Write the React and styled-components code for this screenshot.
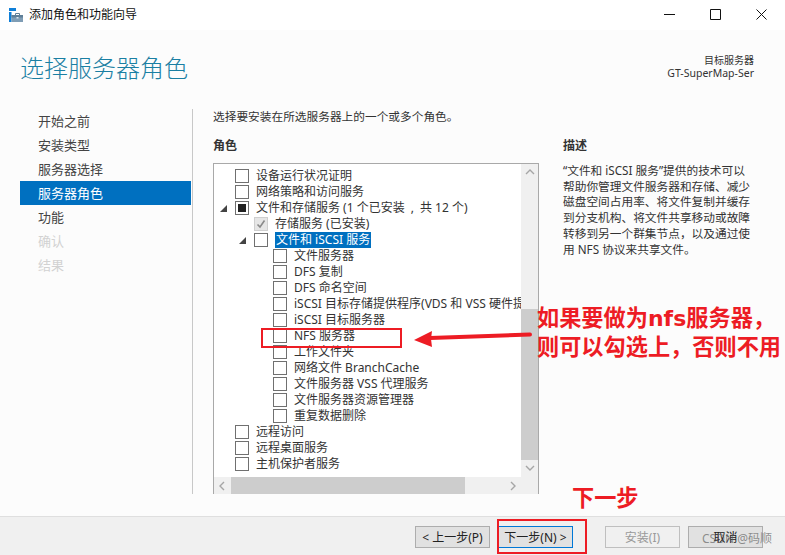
import React from 'react'
import styled, { createGlobalStyle } from 'styled-components'

const FONT = '"Noto Sans", "Noto Sans CJK SC", sans-serif'

const GlobalStyle = createGlobalStyle`
  html, body {
    margin: 0;
    padding: 0;
    background: #fcfcfc;
    overflow: hidden;
  }
  * {
    box-sizing: border-box;
  }
`

const Window = styled.div`
  position: relative;
  width: 785px;
  height: 555px;
  display: flex;
  flex-direction: column;
  overflow: hidden;
  background: #fcfcfc;
  color: #3c3c3c;
  font-family: ${FONT};
  font-size: 12px;
`

const TitleBar = styled.div`
  height: 30px;
  flex: none;
  display: flex;
  align-items: center;
  padding-left: 9px;
  background: #fff;
`

const TitleText = styled.span`
  margin-left: 6px;
  color: #111;
  font-size: 12px;
  line-height: 16px;
`

const WindowButtons = styled.div`
  margin-left: auto;
  align-self: flex-start;
  display: flex;
  padding-right: 1px;
`

const WindowButton = styled.div`
  width: 46px;
  height: 28px;
  display: flex;
  align-items: center;
  justify-content: center;
`

const Header = styled.div`
  height: 70px;
  flex: none;
  display: flex;
  justify-content: space-between;
  padding: 22px 31px 0 20px;
`

const PageTitle = styled.h1`
  margin: 0;
  color: #1a7fa3;
  font-size: 24px;
  font-weight: 300;
  line-height: 32px;
`

const TargetServer = styled.div`
  padding-top: 2px;
  text-align: right;
  color: #333;
  font-size: 10.5px;
  line-height: 13px;
  & > .cjk {
    font-size: 10px;
  }
`

const Body = styled.div`
  flex: 1;
  min-height: 0;
  display: flex;
  padding: 9px 0 22px 20px;
`

const Sidebar = styled.div`
  width: 173px;
  flex: none;
  border-right: 1px solid #c8c8c8;
  padding-right: 1px;
`

const StepItem = styled.div`
  height: 24px;
  padding-left: 18px;
  font-size: 13px;
  line-height: 24px;
  color: ${p => (p.$disabled ? '#d2d2d2' : p.$active ? '#fff' : '#444')};
  background: ${p => (p.$active ? '#0070c0' : 'transparent')};
`

const Content = styled.div`
  flex: 1;
  min-width: 0;
  padding-left: 20px;
`

const Intro = styled.div`
  height: 16px;
  line-height: 14px;
  color: #333;
  font-size: 11.7px;
`

const Columns = styled.div`
  display: flex;
  gap: 24px;
  margin-top: 12px;
`

const RolesColumn = styled.div`
  width: 326px;
  flex: none;
`

const SectionLabel = styled.div`
  height: 26px;
  padding-top: 1px;
  font-size: 12px;
  font-weight: 700;
  line-height: 16px;
  color: #333;
`

const ListBox = styled.div`
  width: 326px;
  height: 331px;
  display: grid;
  grid-template-columns: 1fr 17px;
  grid-template-rows: 1fr 17px;
  border: 1px solid #a9a9a9;
  background: #fff;
`

const Rows = styled.div`
  min-width: 0;
  overflow: hidden;
  padding-top: 4px;
`

const Row = styled.div`
  height: 16px;
  display: flex;
  align-items: center;
  white-space: nowrap;
  padding-left: ${p => 6 + p.$level * 19}px;
  color: #333;
  font-size: 12px;
`

const Expander = styled.span`
  width: 15px;
  flex: none;
  display: flex;
  align-items: center;
`

const CheckBox = styled.span`
  width: 14px;
  height: 14px;
  flex: none;
  display: flex;
  align-items: center;
  justify-content: center;
  border: 1px solid ${p => (p.$disabled ? '#cfcfcf' : '#707070')};
  background: ${p => (p.$disabled ? '#e6e6e6' : '#fff')};
`

const MixedMark = styled.span`
  width: 8px;
  height: 8px;
  background: #222;
`

const RowLabel = styled.span`
  margin-left: 7px;
  padding: 0 ${p => (p.$selected ? '1px' : '0')};
  line-height: 16px;
  color: ${p => (p.$selected ? '#fff' : 'inherit')};
  background: ${p => (p.$selected ? '#0070c0' : 'transparent')};
`

const VerticalBar = styled.div`
  display: flex;
  flex-direction: column;
  background: #f0f0f0;
`

const HorizontalBar = styled.div`
  display: flex;
  background: #f0f0f0;
`

const ScrollButton = styled.div`
  width: 17px;
  height: 17px;
  flex: none;
  display: flex;
  align-items: center;
  justify-content: center;
`

const VerticalTrack = styled.div`
  flex: 1;
  padding-top: ${p => p.$offset}px;
  & > div {
    height: 151px;
    background: #cdcdcd;
  }
`

const HorizontalThumb = styled.div`
  width: 234px;
  flex: none;
  background: #cdcdcd;
`

const Spacer = styled.div`
  flex: 1;
`

const Corner = styled.div`
  background: #f0f0f0;
`

const DescriptionColumn = styled.div`
  width: 195px;
  flex: none;
`

const Description = styled.p`
  margin: 0;
  color: #333;
  font-size: 11.7px;
  line-height: 15.7px;
  white-space: pre-line;
`

const Footer = styled.div`
  height: 39px;
  flex: none;
  display: flex;
  justify-content: flex-end;
  gap: 8px;
  padding: 9px 22px 0 0;
  border-top: 1px solid #dfdfdf;
  background: #f0f0f0;
`

const WizardButton = styled.div`
  width: 75px;
  height: 22px;
  margin-left: ${p => (p.$gapBefore ? '24px' : '0')};
  display: flex;
  align-items: center;
  justify-content: center;
  border: 1px solid ${p => (p.$disabled ? '#bfbfbf' : p.$focused ? '#0078d7' : '#adadad')};
  background: ${p => (p.$disabled ? '#f0f0f0' : '#e1e1e1')};
  color: ${p => (p.$disabled ? '#9a9a9a' : '#222')};
  font-size: 12px;
  white-space: nowrap;
`

const RedBox = styled.div`
  position: absolute;
  left: ${p => p.$x}px;
  top: ${p => p.$y}px;
  width: ${p => p.$w}px;
  height: ${p => p.$h}px;
  border: 2px solid #ed1c24;
`

const RedNote = styled.div`
  position: absolute;
  left: ${p => p.$x}px;
  top: ${p => p.$y}px;
  color: #ed1c24;
  font-size: 22.2px;
  font-weight: 700;
  line-height: 29px;
  white-space: nowrap;
  & > .latin {
    font-family: "DejaVu Sans", sans-serif;
    font-size: 22px;
  }
`

const ArrowOverlay = styled.svg`
  position: absolute;
  left: 410px;
  top: 325px;
`

const Watermark = styled.div`
  position: absolute;
  left: 702px;
  top: 531px;
  color: rgba(90, 90, 90, 0.65);
  font-size: 12px;
  line-height: 16px;
  white-space: nowrap;
`

const steps = [
  { label: '开始之前' },
  { label: '安装类型' },
  { label: '服务器选择' },
  { label: '服务器角色', active: true },
  { label: '功能' },
  { label: '确认', disabled: true },
  { label: '结果', disabled: true },
]

const roles = [
  { level: 0, label: '设备运行状况证明' },
  { level: 0, label: '网络策略和访问服务' },
  { level: 0, label: '文件和存储服务 (1 个已安装\u2002,\u2002共 12 个)', expanded: true, state: 'mixed' },
  { level: 1, label: '存储服务 (已安装)', state: 'installed' },
  { level: 1, label: '文件和 iSCSI 服务', expanded: true, selected: true },
  { level: 2, label: '文件服务器' },
  { level: 2, label: 'DFS 复制' },
  { level: 2, label: 'DFS 命名空间' },
  { level: 2, label: 'iSCSI 目标存储提供程序(VDS 和 VSS 硬件提供程序)' },
  { level: 2, label: 'iSCSI 目标服务器' },
  { level: 2, label: 'NFS 服务器' },
  { level: 2, label: '工作文件夹' },
  { level: 2, label: '网络文件 BranchCache' },
  { level: 2, label: '文件服务器 VSS 代理服务' },
  { level: 2, label: '文件服务器资源管理器' },
  { level: 2, label: '重复数据删除' },
  { level: 0, label: '远程访问' },
  { level: 0, label: '远程桌面服务' },
  { level: 0, label: '主机保护者服务' },
]

const descriptionText = `“文件和 iSCSI 服务”提供的技术可以
帮助你管理文件服务器和存储、减少
磁盘空间占用率、将文件复制并缓存
到分支机构、将文件共享移动或故障
转移到另一个群集节点，以及通过使
用 NFS 协议来共享文件。`

function AppIcon() {
  return (
    <svg width="14" height="14" viewBox="0 0 14 14">
      <path d="M0 0h7v3H0z" fill="#0f7fd8" />
      <path d="M0 4h2.500v10H0z" fill="#0f7fd8" />
      <path d="M2.500 7h11.500v7H2.500z" fill="#7f9db5" />
      <path d="M2.500 7h11.500v2.500H2.500z" fill="#5f7f98" />
      <path d="M6.500 7V5.500h4V7" fill="none" stroke="#5f7f98" />
      <path d="M7.500 9h2v1.500h-2z" fill="#d8e2ea" />
    </svg>
  )
}

function Chevron({ dir }) {
  const paths = {
    up: 'M1 6l4-4 4 4',
    down: 'M1 2l4 4 4-4',
    left: 'M6 1L2 5l4 4',
    right: 'M3 1l4 4-4 4',
  }
  return (
    <svg width="10" height="10" viewBox="0 0 10 10">
      <path d={paths[dir]} fill="none" stroke="#a6a6a6" strokeWidth="1.400" />
    </svg>
  )
}

function RoleRow({ role }) {
  return (
    <Row $level={role.level}>
      <Expander>
        {role.expanded && (
          <svg width="7" height="7" viewBox="0 0 7 7">
            <path d="M7 0v7H0z" fill="#444" />
          </svg>
        )}
      </Expander>
      <CheckBox $disabled={role.state === 'installed'}>
        {role.state === 'mixed' && <MixedMark />}
        {role.state === 'installed' && (
          <svg width="10" height="10" viewBox="0 0 10 10">
            <path d="M1.500 5.500l2.500 2.500 4.500-6.500" fill="none" stroke="#8a8a8a" strokeWidth="1.600" />
          </svg>
        )}
      </CheckBox>
      <RowLabel $selected={role.selected}>{role.label}</RowLabel>
    </Row>
  )
}

export default function App() {
  return (
    <Window>
      <GlobalStyle />
      <TitleBar>
        <AppIcon />
        <TitleText>添加角色和功能向导</TitleText>
        <WindowButtons>
          <WindowButton>
            <svg width="11" height="11" viewBox="0 0 11 11">
              <path d="M0 5.500h11" stroke="#111" />
            </svg>
          </WindowButton>
          <WindowButton>
            <svg width="11" height="11" viewBox="0 0 11 11">
              <path d="M.5.500h10v10H.5z" fill="none" stroke="#111" />
            </svg>
          </WindowButton>
          <WindowButton>
            <svg width="11" height="11" viewBox="0 0 11 11">
              <path d="M.5.500l10 10M10.500.500l-10 10" stroke="#111" />
            </svg>
          </WindowButton>
        </WindowButtons>
      </TitleBar>

      <Header>
        <PageTitle>选择服务器角色</PageTitle>
        <TargetServer>
          <div className="cjk">目标服务器</div>
          <div>GT-SuperMap-Ser</div>
        </TargetServer>
      </Header>

      <Body>
        <Sidebar>
          {steps.map(step => (
            <StepItem key={step.label} $active={step.active} $disabled={step.disabled}>
              {step.label}
            </StepItem>
          ))}
        </Sidebar>

        <Content>
          <Intro>选择要安装在所选服务器上的一个或多个角色。</Intro>
          <Columns>
            <RolesColumn>
              <SectionLabel>角色</SectionLabel>
              <ListBox>
                <Rows>
                  {roles.map(role => (
                    <RoleRow key={role.label} role={role} />
                  ))}
                </Rows>
                <VerticalBar>
                  <ScrollButton><Chevron dir="up" /></ScrollButton>
                  <VerticalTrack $offset={128}><div /></VerticalTrack>
                  <ScrollButton><Chevron dir="down" /></ScrollButton>
                </VerticalBar>
                <HorizontalBar>
                  <ScrollButton><Chevron dir="left" /></ScrollButton>
                  <HorizontalThumb />
                  <Spacer />
                  <ScrollButton><Chevron dir="right" /></ScrollButton>
                </HorizontalBar>
                <Corner />
              </ListBox>
            </RolesColumn>
            <DescriptionColumn>
              <SectionLabel>描述</SectionLabel>
              <Description>{descriptionText}</Description>
            </DescriptionColumn>
          </Columns>
        </Content>
      </Body>

      <Footer>
        <WizardButton>&lt; 上一步(P)</WizardButton>
        <WizardButton $focused>下一步(N) &gt;</WizardButton>
        <WizardButton $gapBefore $disabled>安装(I)</WizardButton>
        <WizardButton>取消</WizardButton>
      </Footer>

      <RedBox $x={261} $y={328} $w={141} $h={20} />
      <RedBox $x={497} $y={519} $w={90} $h={35} />
      <ArrowOverlay width="124" height="24" viewBox="0 0 124 24">
        <path d="M120 9.500L20 13" stroke="#ed1c24" strokeWidth="4" strokeLinecap="round" />
        <path d="M4 15L22 6l-1 8 1 8z" fill="#ed1c24" />
      </ArrowOverlay>
      <RedNote $x={537} $y={303}>如果要做为<span className="latin">nfs</span>服务器，</RedNote>
      <RedNote $x={537} $y={332}>则可以勾选上，否则不用</RedNote>
      <RedNote $x={572} $y={483}>下一步</RedNote>
      <Watermark>CSDN @码顺</Watermark>
    </Window>
  )
}
